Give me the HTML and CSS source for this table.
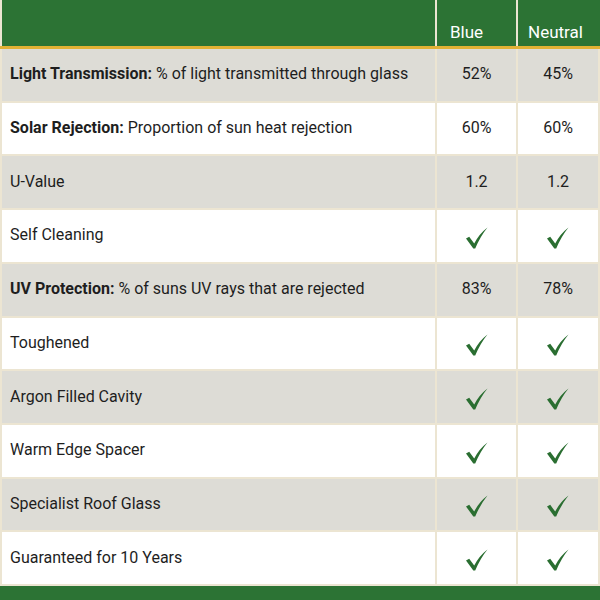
FILE: index.html
```html
<!DOCTYPE html>
<html>
<head>
<meta charset="utf-8">
<link rel="stylesheet" href="styles.css">
</head>
<body>
<div class="page">
  <div class="head">
    <div class="hcell"></div>
    <div class="hcell blue">Blue</div>
    <div class="hcell neutral">Neutral</div>
  </div>
  <div class="gold"></div>
  <div class="rows">
    <div class="row gray"><div class="label"><span><b>Light Transmission:</b> % of light transmitted through glass</span></div><div class="val">52%</div><div class="val">45%</div></div>
    <div class="row white"><div class="label"><span><b>Solar Rejection:</b> Proportion of sun heat rejection</span></div><div class="val">60%</div><div class="val">60%</div></div>
    <div class="row gray"><div class="label">U-Value</div><div class="val">1.2</div><div class="val">1.2</div></div>
    <div class="row white"><div class="label">Self Cleaning</div><div class="val"><svg class="tick" viewBox="0 0 24 24"><path d="M1 12.5 L4.2 10.8 L9.2 17.6 Q14 8 22.5 1.5 Q15.5 10 10.2 22.5 L8.3 22.5 Z"/></svg></div><div class="val"><svg class="tick" viewBox="0 0 24 24"><path d="M1 12.5 L4.2 10.8 L9.2 17.6 Q14 8 22.5 1.5 Q15.5 10 10.2 22.5 L8.3 22.5 Z"/></svg></div></div>
    <div class="row gray"><div class="label"><span><b>UV Protection:</b> % of suns UV rays that are rejected</span></div><div class="val">83%</div><div class="val">78%</div></div>
    <div class="row white"><div class="label">Toughened</div><div class="val"><svg class="tick" viewBox="0 0 24 24"><path d="M1 12.5 L4.2 10.8 L9.2 17.6 Q14 8 22.5 1.5 Q15.5 10 10.2 22.5 L8.3 22.5 Z"/></svg></div><div class="val"><svg class="tick" viewBox="0 0 24 24"><path d="M1 12.5 L4.2 10.8 L9.2 17.6 Q14 8 22.5 1.5 Q15.5 10 10.2 22.5 L8.3 22.5 Z"/></svg></div></div>
    <div class="row gray"><div class="label">Argon Filled Cavity</div><div class="val"><svg class="tick" viewBox="0 0 24 24"><path d="M1 12.5 L4.2 10.8 L9.2 17.6 Q14 8 22.5 1.5 Q15.5 10 10.2 22.5 L8.3 22.5 Z"/></svg></div><div class="val"><svg class="tick" viewBox="0 0 24 24"><path d="M1 12.5 L4.2 10.8 L9.2 17.6 Q14 8 22.5 1.5 Q15.5 10 10.2 22.5 L8.3 22.5 Z"/></svg></div></div>
    <div class="row white"><div class="label">Warm Edge Spacer</div><div class="val"><svg class="tick" viewBox="0 0 24 24"><path d="M1 12.5 L4.2 10.8 L9.2 17.6 Q14 8 22.5 1.5 Q15.5 10 10.2 22.5 L8.3 22.5 Z"/></svg></div><div class="val"><svg class="tick" viewBox="0 0 24 24"><path d="M1 12.5 L4.2 10.8 L9.2 17.6 Q14 8 22.5 1.5 Q15.5 10 10.2 22.5 L8.3 22.5 Z"/></svg></div></div>
    <div class="row gray"><div class="label">Specialist Roof Glass</div><div class="val"><svg class="tick" viewBox="0 0 24 24"><path d="M1 12.5 L4.2 10.8 L9.2 17.6 Q14 8 22.5 1.5 Q15.5 10 10.2 22.5 L8.3 22.5 Z"/></svg></div><div class="val"><svg class="tick" viewBox="0 0 24 24"><path d="M1 12.5 L4.2 10.8 L9.2 17.6 Q14 8 22.5 1.5 Q15.5 10 10.2 22.5 L8.3 22.5 Z"/></svg></div></div>
    <div class="row white"><div class="label">Guaranteed for 10 Years</div><div class="val"><svg class="tick" viewBox="0 0 24 24"><path d="M1 12.5 L4.2 10.8 L9.2 17.6 Q14 8 22.5 1.5 Q15.5 10 10.2 22.5 L8.3 22.5 Z"/></svg></div><div class="val"><svg class="tick" viewBox="0 0 24 24"><path d="M1 12.5 L4.2 10.8 L9.2 17.6 Q14 8 22.5 1.5 Q15.5 10 10.2 22.5 L8.3 22.5 Z"/></svg></div></div>
  </div>
  <div class="foot"></div>
</div>
</body>
</html>
```

FILE: styles.css
```css
html, body {
  margin: 0;
  padding: 0;
}
body {
  background: #ece5d2;
  font-family: Roboto, "Liberation Sans", sans-serif;
  color: #1e1e1e;
}
.page {
  width: 600px;
  height: 600px;
  display: flex;
  flex-direction: column;
  overflow: hidden;
}
.head {
  height: 46px;
  display: grid;
  grid-template-columns: 433px 79px 82px;
  column-gap: 2px;
  padding-left: 2px;
  flex: none;
}
.hcell {
  background: #2c7334;
  color: #fff;
  font-size: 17px;
  display: flex;
  align-items: flex-end;
  padding-bottom: 4px;
}
.blue { padding-left: 13px; }
.neutral { padding-left: 10px; }
.gold {
  height: 3px;
  background: #e2b134;
  flex: none;
}
.rows {
  flex: 1;
  display: grid;
  grid-template-rows: repeat(10, 1fr);
  row-gap: 2px;
  padding: 0 2px 2px 2px;
}
.row {
  display: grid;
  grid-template-columns: 433px 79px 80px;
  column-gap: 2px;
}
.row > div {
  display: flex;
  align-items: center;
}
.gray > div { background: #dddcd6; }
.white > div { background: #ffffff; }
.label {
  padding-left: 8px;
  padding-bottom: 2px;
  font-size: 16px;
}
.label b { font-weight: 700; }
.val {
  justify-content: center;
  font-size: 16px;
  padding-bottom: 2px;
}
.tick {
  width: 24px;
  height: 24px;
  fill: #2a6e31;
  margin-top: 6px;
}
.foot {
  height: 14px;
  background: #2c7334;
  flex: none;
}
```
